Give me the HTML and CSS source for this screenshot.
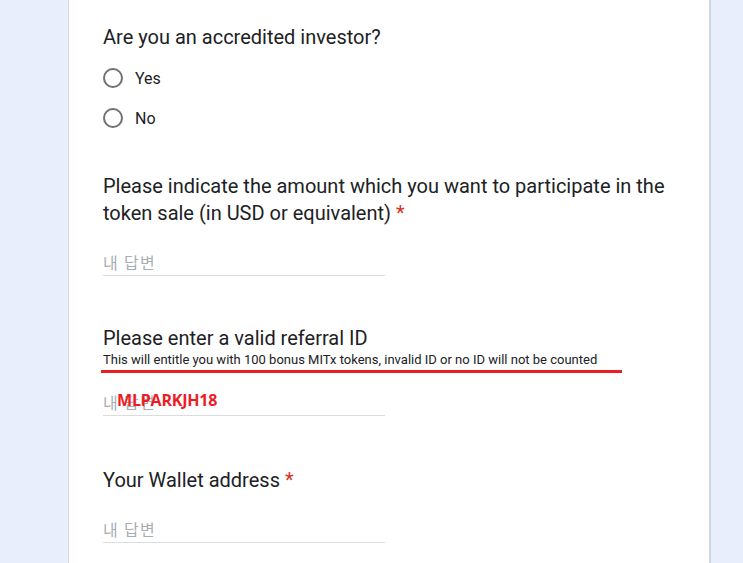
FILE: index.html
```html
<!DOCTYPE html>
<html>
<head>
<meta charset="utf-8">
<link rel="stylesheet" href="styles.css">
</head>
<body>
<div class="page">
  <div class="card">
    <div class="item q1">
      <div class="title">Are you an accredited investor?</div>
      <div class="options">
        <label class="opt"><span class="radio"></span><span class="opt-text">Yes</span></label>
        <label class="opt"><span class="radio"></span><span class="opt-text">No</span></label>
      </div>
    </div>
    <div class="item q2">
      <div class="title">Please indicate the amount which you want to participate in the token sale (in USD or equivalent) <span class="req">*</span></div>
      <div class="answer"><span class="ph">내 답변</span></div>
    </div>
    <div class="item q3">
      <div class="title">Please enter a valid referral ID</div>
      <div class="desc">This will entitle you with 100 bonus MITx tokens, invalid ID or no ID will not be counted</div>
      <div class="redline"></div>
      <div class="answer"><span class="ph">내 답변</span><span class="note">MLPARKJH18</span></div>
    </div>
    <div class="item q4">
      <div class="title">Your Wallet address <span class="req">*</span></div>
      <div class="answer"><span class="ph">내 답변</span></div>
    </div>
  </div>
</div>
</body>
</html>
```
FILE: styles.css
```css
html, body {
  margin: 0;
  padding: 0;
  background: #e8eefb;
  font-family: Roboto, "Noto Sans CJK KR", sans-serif;
  color: #202124;
  overflow: hidden;
}
.page {
  width: 743px;
  height: 563px;
  display: flex;
}
.card {
  margin-left: 68px;
  width: 643px;
  background: #fff;
  border-left: 1px solid #d3d9e4;
  border-right: 2px solid #cfd6e3;
  padding: 0 0 0 34px;
  box-sizing: border-box;
  display: flex;
  flex-direction: column;
}
.title {
  font-size: 20px;
  line-height: 27px;
  width: 570px;
}
.req { color: #d93025; }
.q1 { padding-top: 24px; }
.options {
  display: flex;
  flex-direction: column;
  margin-top: 15px;
  gap: 16px;
}
.opt {
  display: flex;
  align-items: center;
  height: 24px;
}
.radio {
  width: 16px;
  height: 16px;
  border: 2px solid #6e7175;
  border-radius: 50%;
}
.opt-text {
  margin-left: 12px;
  font-size: 16px;
  color: #202124;
}
.q2 { margin-top: 43px; }
.answer {
  position: relative;
  width: 282px;
  height: 29px;
  border-bottom: 1px solid #dadce0;
  display: flex;
  align-items: flex-end;
}
.q2 .answer { margin-top: 19px; }
.ph {
  font-family: "Noto Sans CJK KR", sans-serif;
  font-size: 16px;
  line-height: 24px;
  color: #a9adb2;
  padding-bottom: 1px;
  letter-spacing: 1.3px;
}
.q3 { margin-top: 49px; position: relative; }
.desc {
  font-size: 13px;
  line-height: 16px;
  color: #202124;
}
.redline {
  position: absolute;
  left: -2px;
  top: 45px;
  width: 521px;
  height: 3px;
  background: #ed1c24;
}
.q3 .answer { margin-top: 18px; }
.note {
  position: absolute;
  left: 14px;
  top: 3px;
  font-family: "Open Sans", sans-serif;
  font-weight: 700;
  font-size: 16px;
  color: #ed1c24;
  letter-spacing: -0.2px;
}
.q4 { margin-top: 51px; }
.q4 .answer { margin-top: 19px; }
```
